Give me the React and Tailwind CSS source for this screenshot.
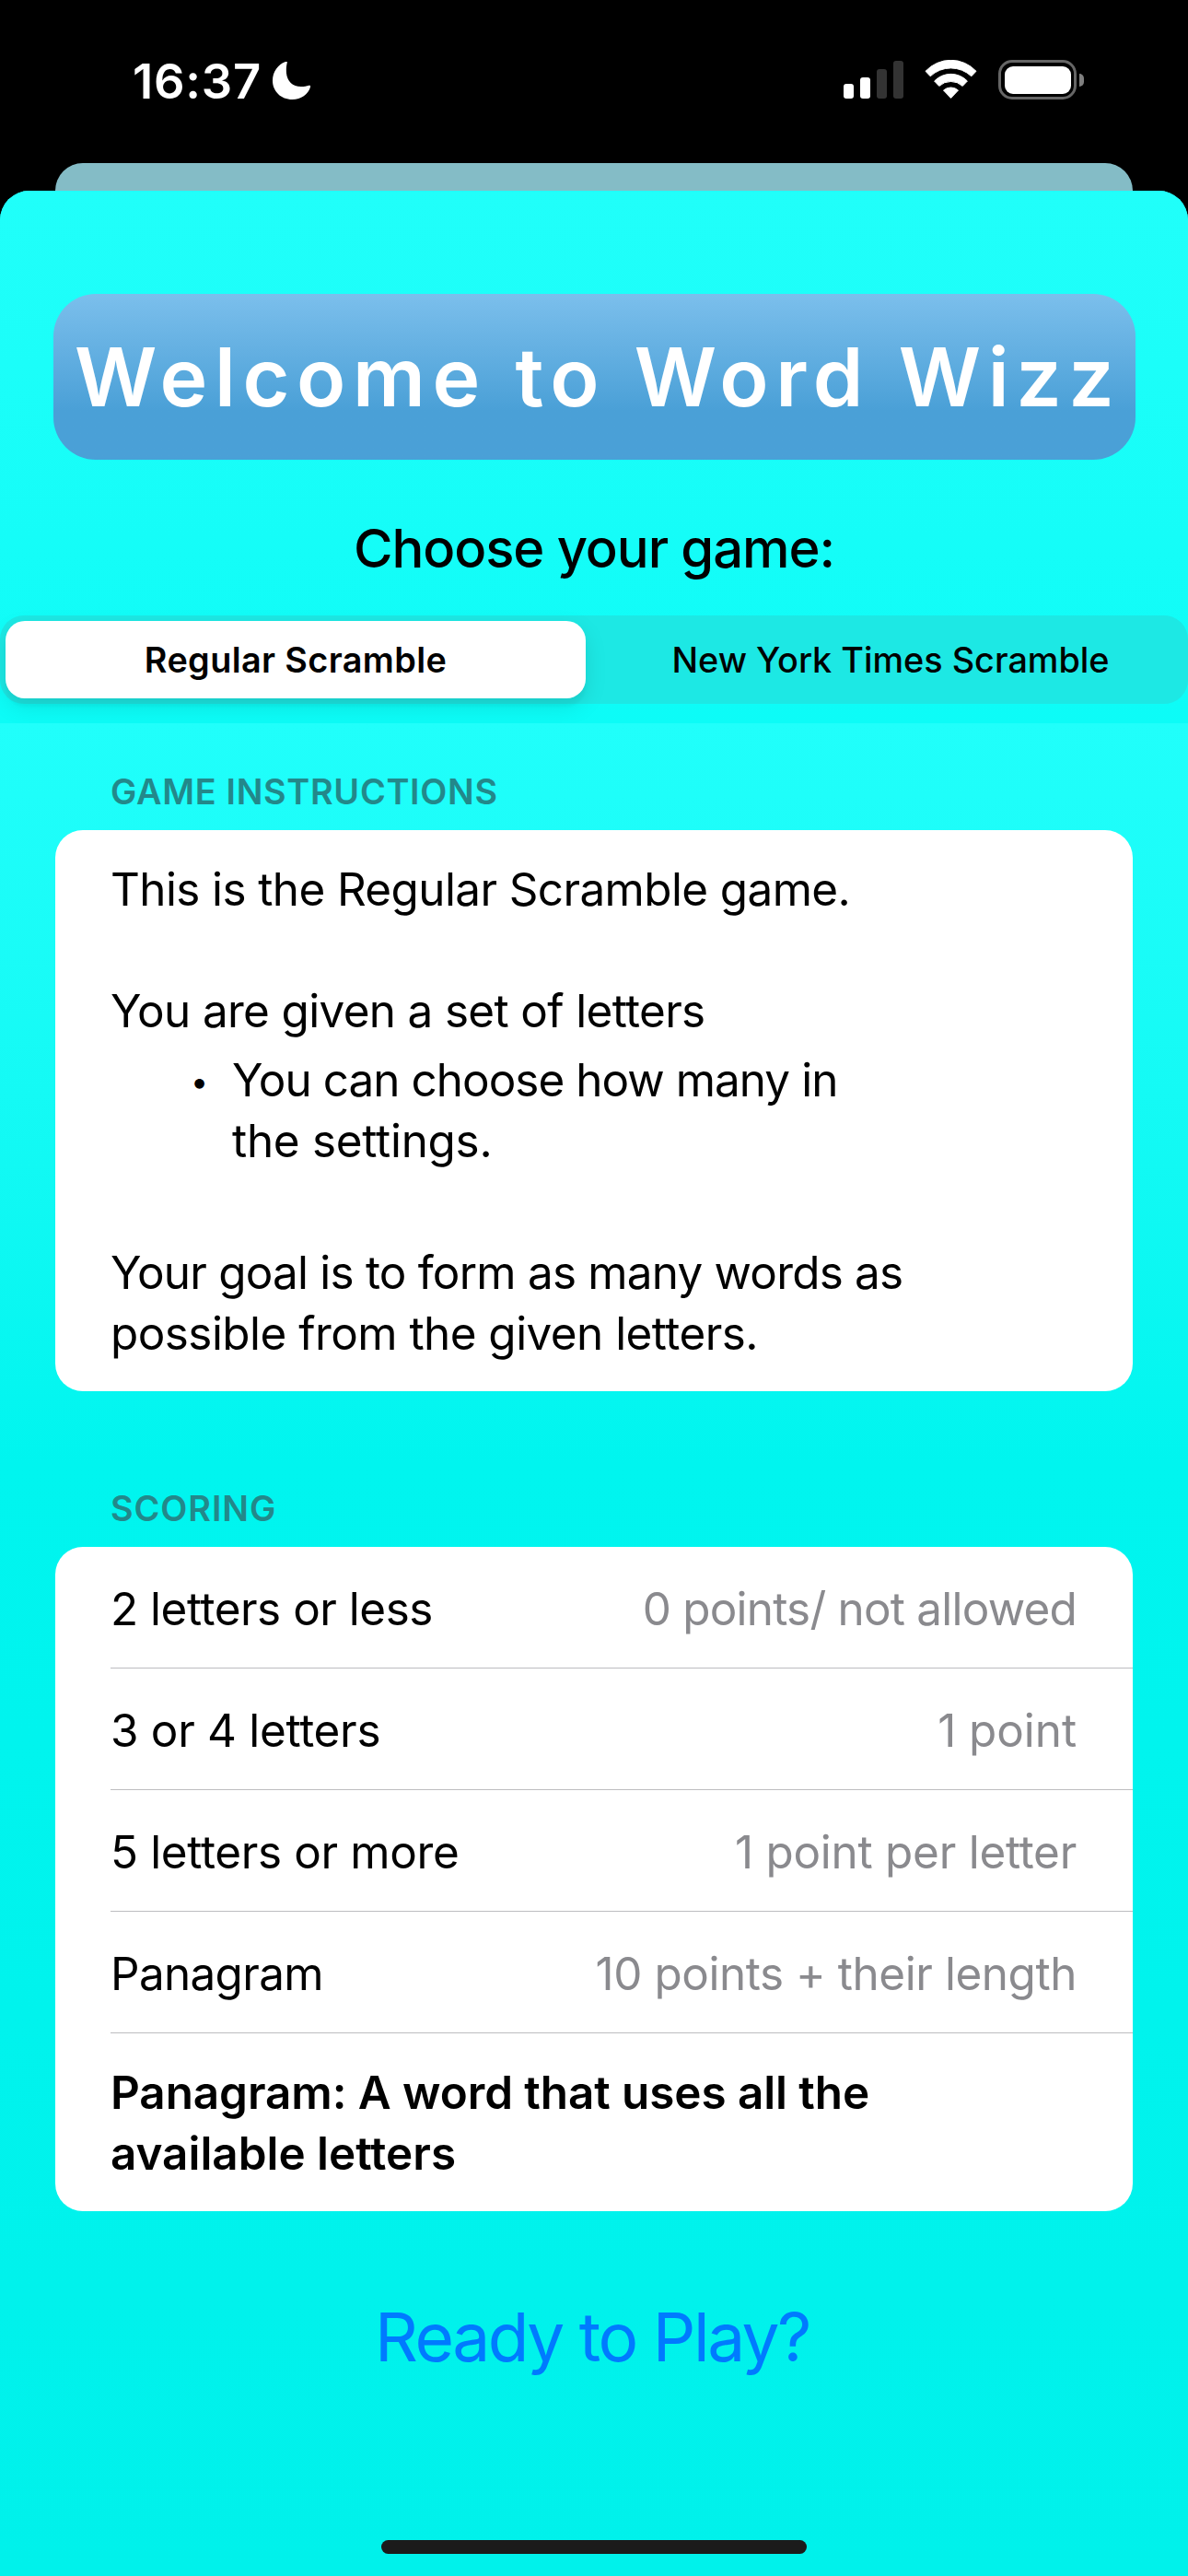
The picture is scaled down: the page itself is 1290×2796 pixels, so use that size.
import React from "react";

const scoring = [
  { label: "2 letters or less", value: "0 points/ not allowed", labelTracking: "tracking-[-0.46px]", valueTracking: "tracking-[-0.76px]" },
  { label: "3 or 4 letters", value: "1 point", labelTracking: "tracking-[-0.28px]", valueTracking: "tracking-[-0.05px]" },
  { label: "5 letters or more", value: "1 point per letter", labelTracking: "tracking-[-0.34px]", valueTracking: "tracking-[-0.24px]" },
  { label: "Panagram", value: "10 points + their length", labelTracking: "tracking-[-0.65px]", valueTracking: "tracking-[-0.42px]" },
];

function Moon() {
  return (
    <svg width="42" height="42" viewBox="0 0 42 42" fill="white">
      <path d="M15.8 1C15 4 14.6 8 15 12.5C15.8 21 21.5 27 31 27C34 27 37 26.6 39.3 25.8C40.8 25.3 41.4 26.2 41 27.5C38.5 35.5 31 41 21.5 41C9 41 0 32 0 20.5C0 11 6 3 14 .1C15.3 -.3 16.2 0 15.8 1Z" />
    </svg>
  );
}

function Signal() {
  return (
    <div className="flex h-[42px] items-end gap-[7px]">
      <div className="h-4 w-[11px] rounded-[3px] bg-white" />
      <div className="h-[23px] w-[11px] rounded-[3px] bg-white" />
      <div className="h-8 w-[11px] rounded-[3px] bg-[#333]" />
      <div className="h-[41px] w-[11px] rounded-[3px] bg-[#333]" />
    </div>
  );
}

function Wifi() {
  return (
    <svg width="57" height="42" viewBox="0 0 57 42" fill="white" stroke="white" strokeWidth="1" strokeLinejoin="round">
      <path d="M1 12.3A37.5 37.5 0 0 1 56 12.3L50.8 17.8A32.4 32.4 0 0 0 6.2 17.8Z" />
      <path d="M10.6 23A24.8 24.8 0 0 1 46.4 23L41.2 28.4A18.8 18.8 0 0 0 15.8 28.4Z" />
      <path d="M20.5 33A12 12 0 0 1 36.5 33L28.5 41.4Z" />
    </svg>
  );
}

function Battery() {
  return (
    <div className="flex items-center gap-[3px]">
      <div className="h-[43px] w-[85px] rounded-[15px] border-[3.5px] border-[#666] p-[3.5px]">
        <div className="h-full w-full rounded-[9px] bg-white" />
      </div>
      <div className="h-3.5 w-[5px] rounded-r-full bg-[#7f7f7f]" />
    </div>
  );
}

function StatusBar() {
  return (
    <header className="flex h-[177px] items-start justify-between pl-36 pr-[113px] pt-[65px] text-white">
      <div className="flex h-[46px] items-center">
        <span className="w-[152px] text-[52.5px] font-semibold tracking-[0.77px]">16:37</span>
        <Moon />
      </div>
      <div className="flex items-start">
        <Signal />
        <div className="ml-[23px]"><Wifi /></div>
        <div className="ml-[23px]"><Battery /></div>
      </div>
    </header>
  );
}

function SectionLabel({ children, className }) {
  return <h2 className={`px-[60px] text-[37.8px] font-semibold leading-[48px] text-[#23888a] ${className}`}>{children}</h2>;
}

export default function App() {
  return (
    <div className="flex h-[2796px] w-[1290px] flex-col overflow-hidden bg-black font-['Inter',sans-serif] text-black">
      <StatusBar />
      <div className="mx-[60px] h-[60px] shrink-0 rounded-t-[30px] bg-[#84bcc6]" />
      <main className="-mt-[30px] flex flex-1 flex-col overflow-hidden rounded-t-[32px] bg-[#20fffa]">
        <section className="h-[578px] shrink-0 bg-linear-to-b from-[#20fffa] to-[#0cfcf7] pt-28">
          <h1 className="ml-[58px] flex h-[180px] w-[1175px] items-center whitespace-nowrap rounded-[46px] bg-linear-to-b from-[#7bbfec] via-[#4aa0d7] via-70% to-[#4aa0d7] pl-[23px] pt-0.5 text-[87.6px] font-semibold tracking-[7.6px] [word-spacing:1px] text-white">
            Welcome to Word Wizz
          </h1>
          <p className="mt-[63px] text-center text-[58px] font-medium leading-[66px] tracking-[-1.08px]">Choose your game:</p>
          <div className="mt-10 grid h-24 grid-cols-[636px_1fr] rounded-[26px] bg-[#1de8e4] py-1.5 text-[37.8px] font-medium">
            <button className="ml-1.5 rounded-[21px] bg-white font-semibold tracking-[0.38px] shadow-[0_9px_24px_rgba(0,0,0,0.1),0_9px_3px_rgba(0,0,0,0.03)]">Regular Scramble</button>
            <button className="pl-2">New York Times Scramble</button>
          </div>
        </section>

        <section className="flex flex-1 flex-col bg-linear-to-b from-[#20fffb] via-[#00f5ef] via-40% to-[#00f1eb] px-[60px] pt-[50px]">
          <SectionLabel className="tracking-[0.7px]">GAME INSTRUCTIONS</SectionLabel>
          <article className="mt-[18px] h-[609px] rounded-[30px] bg-white px-[60px] pt-[31px] text-[49.4px] leading-[66px]">
            <p className="tracking-[-0.59px]">This is the Regular Scramble game.</p>
            <p className="mt-[66px] tracking-[-0.64px]">You are given a set of letters</p>
            <ul className="mt-[9px]">
              <li className="flex">
                <span className="w-[132px] pl-[87px] pt-0.5 text-[34px]">•</span>
                <span>
                  <span className="block tracking-[-0.94px]">You can choose how many in</span>
                  <span className="block tracking-[-0.26px]">the settings.</span>
                </span>
              </li>
            </ul>
            <p className="mt-[77px]">
              <span className="block tracking-[-0.77px]">Your goal is to form as many words as</span>
              <span className="block tracking-[-0.52px]">possible from the given letters.</span>
            </p>
          </article>

          <SectionLabel className="mt-[103px] tracking-[0.95px]">SCORING</SectionLabel>
          <article className="mt-[18px] h-[721px] rounded-[30px] bg-white pl-[60px] text-[49.4px]">
            {scoring.map((row) => (
              <div key={row.label} className="flex h-[132px] items-center justify-between border-b border-[#bdbdc0] pr-[61px] pt-[3px]">
                <span className={row.labelTracking}>{row.label}</span>
                <span className={`text-[#8a8a8e] ${row.valueTracking}`}>{row.value}</span>
              </div>
            ))}
            <p className="pt-[31px] font-semibold leading-[66px]">
              <span className="block tracking-[-0.06px]">Panagram: A word that uses all the</span>
              <span className="block">available letters</span>
            </p>
          </article>

          <button className="mt-[92px] pr-1 text-center text-[73px] leading-[90px] tracking-[-2.5px] text-[#007aff]">Ready to Play?</button>
          <div className="mx-auto mb-6 mt-auto h-[15px] w-[462px] rounded-full bg-[#1b1b1b]" />
        </section>
      </main>
    </div>
  );
}
